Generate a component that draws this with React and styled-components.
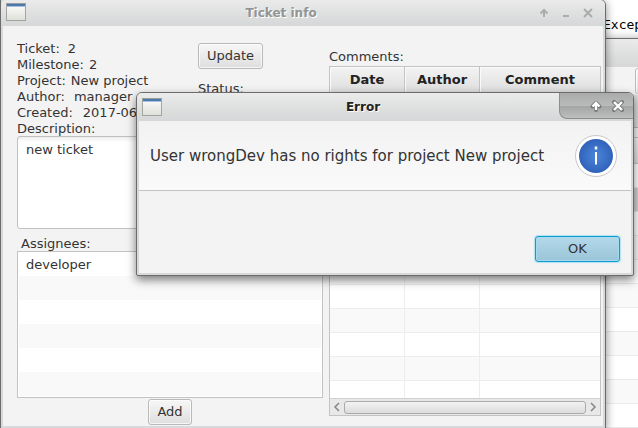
import React from "react";
import styled, { createGlobalStyle, css } from "styled-components";

const GlobalStyle = createGlobalStyle`
  * { box-sizing: border-box; }
  body {
    margin: 0;
    background: #fff;
    color: #333;
    font: 13px/16px "DejaVu Sans", sans-serif;
  }
  button, textarea { font: inherit; color: inherit; }
`;

const Desktop = styled.main`
  position: relative;
  min-height: 100vh;
  overflow: hidden;
`;

const Console = styled.pre`
  position: absolute;
  top: 17px;
  right: 0;
  width: 35px;
  margin: 0;
  overflow: hidden;
  color: #000;
  font: 13px/16px "DejaVu Sans Mono", monospace;
`;

const Frame = styled.section`
  position: absolute;
  display: flex;
  flex-direction: column;
  border: 1px solid #6c6c6c;
  background: #d8d9da;
  box-shadow: 0 2px 10px rgba(0, 0, 0, 0.45);
`;

const BackFrame = styled(Frame)`
  top: 38px;
  left: 300px;
  right: -120px;
  bottom: -20px;
`;

const TicketFrame = styled(Frame)`
  top: -1px;
  left: 0;
  right: 32px;
  bottom: -1px;
  border-radius: 0 6px 0 0;
`;

const ErrorFrame = styled(Frame)`
  top: 92px;
  left: 136px;
  right: 4px;
  border-radius: 6px 6px 2px 2px;
  box-shadow: 0 4px 10px rgba(0, 0, 0, 0.5);
`;

const TitleBar = styled.header`
  display: grid;
  grid-template-columns: 30px 1fr 74px;
  flex: none;
  height: ${(p) => p.$height || 28}px;
  border-radius: 5px 5px 0 0;
  background: linear-gradient(#ebebeb, #dfe0e0 50%, #d5d7d8);
`;

const WindowIcon = styled.svg`
  width: 20px;
  height: 18px;
  margin: ${(p) => p.$top}px 0 0 5px;
`;

const Title = styled.h1`
  margin: 0;
  align-self: center;
  text-align: center;
  font-size: 12px;
  line-height: 16px;
  color: ${(p) => (p.$inactive ? "#929596" : "#222")};
  text-shadow: 1px 1px 0 #fff;
`;

const WindowButtons = styled.div`
  display: flex;
  justify-content: flex-end;
  align-items: center;
  height: 26px;
  padding-right: 9px;
  gap: 6px;
  ${(p) =>
    p.$active &&
    css`
      padding-right: 7px;
      border: 1px solid #8b8d8e;
      border-width: 0 0 1px 1px;
      border-radius: 0 5px 0 8px;
      background: linear-gradient(#a9abab, #b9baba 50%, #a3a5a5 52%, #bdbebe);
    `}
`;

const WindowButton = styled.button`
  display: flex;
  padding: 0;
  border: 0;
  background: none;
  svg { width: 16px; height: 16px; }
`;

const Body = styled.div`
  flex: 1;
  min-height: 0;
  margin: 0 2px 2px;
  background: #f3f3f3;
`;

const TicketBody = styled(Body)`
  display: grid;
  grid-template-columns: 306fr 272fr;
  gap: 6px;
  padding: 15px 2px 0 14px;
`;

const Column = styled.div`
  display: flex;
  flex-direction: column;
  min-width: 0;
`;

const Details = styled.div`
  display: grid;
  grid-template-columns: 181px 1fr;
`;

const InfoList = styled.dl`
  margin: 0;
  white-space: nowrap;
`;

const InfoRow = styled.div`
  display: flex;
  gap: ${(p) => p.$gap}px;
  dt, dd { margin: 0; }
`;

const Actions = styled.div`
  display: flex;
  flex-direction: column;
  align-items: flex-start;
  gap: 12px;
  padding-top: 2px;
`;

const Button = styled.button`
  height: 26px;
  padding: 0 8px;
  border: 1px solid #b9b9b9;
  border-radius: 3px;
  background: linear-gradient(#f7f7f7, #dedede);
  box-shadow: inset 0 0 0 1px rgba(255, 255, 255, 0.7);
`;

const ToolButton = styled(Button)`
  width: 32px;
`;

const DefaultButton = styled(Button)`
  width: 85px;
  border-color: #0f9bd0;
  background: linear-gradient(#b3d9ea, #9bc4d8);
  box-shadow: 0 0 1px 1px #b4e2f2, inset 0 0 0 1px #a5dbef;
`;

const DescriptionLabel = styled.label`
  height: 15px;
`;

const Description = styled.textarea`
  display: block;
  width: 100%;
  height: 93px;
  padding: 5px 8px;
  border: 1px solid #c0c0c0;
  border-radius: 3px;
  background: linear-gradient(#ededed, #fff 5px);
  outline: 0;
  resize: none;
`;

const ListLabel = styled.h2`
  margin: 7px 0 0 4px;
  font-size: 13px;
  font-weight: 400;
  line-height: 15px;
`;

const AssigneeList = styled.ul`
  height: 147px;
  margin: 0;
  padding: 0 1px;
  border: 1px solid #c3c3c3;
  list-style: none;
  overflow: hidden;
  background: #fff;
`;

const Assignee = styled.li`
  height: 24px;
  padding: 5px 7px;
  &:nth-child(even) { background: #f9f9f9; }
`;

const AddRow = styled.div`
  display: flex;
  justify-content: center;
  padding-top: 1px;
`;

const CommentsColumn = styled(Column)`
  padding-top: 8px;
`;

const CommentsLabel = styled.h2`
  margin: 0 0 1px;
  font-size: 13px;
  font-weight: 400;
  line-height: 16px;
`;

const TableBox = styled.div`
  display: flex;
  flex-direction: column;
  height: 350px;
  border: 1px solid #c3c3c3;
  background: #fff;
`;

const TableClip = styled.div`
  flex: 1;
  min-height: 0;
  overflow: hidden;
`;

const Table = styled.table`
  width: 100%;
  table-layout: fixed;
  border-collapse: separate;
  border-spacing: 0;
  th, td {
    height: 24px;
    padding: 0;
    border-right: 1px solid #ededed;
    border-bottom: 1px solid #ededed;
  }
  th {
    height: 26px;
    border-color: #c3c3c3;
    background: linear-gradient(#f3f3f3, #dedede);
    box-shadow: inset 1px 1px 0 #fafafa;
    color: #222;
  }
  th:last-child, td:last-child { border-right: 0; }
  tbody tr:nth-child(even) { background: #f9f9f9; }
`;

const Col = styled.col`
  width: ${(p) => p.$width};
`;

const ScrollBar = styled.div`
  display: flex;
  align-items: center;
  height: 17px;
  border-top: 1px solid #d0d0d0;
  background: #e8e8e8;
`;

const ScrollArrow = styled.button`
  display: flex;
  justify-content: center;
  width: 14px;
  padding: 0;
  border: 0;
  background: none;
  svg { width: 8px; height: 10px; }
`;

const Thumb = styled.div`
  flex: 1;
  height: 13px;
  border: 1px solid #ababab;
  border-radius: 3px;
  background: linear-gradient(#f3f3f3, #dcdcdc);
`;

const BackBody = styled(Body)`
  display: flex;
  flex-direction: column;
`;

const BackToolbar = styled.div`
  flex: none;
  display: flex;
  align-items: flex-start;
  height: 61px;
  margin-bottom: 9px;
  padding: 1px 0 0 332px;
  border-bottom: 1px solid #b5b5b5;
  background: linear-gradient(#f3f3f3 27px, #dcdcdc 28px);
`;

const BackList = styled.ul`
  margin: 0;
  padding: 0;
  border-top: 1px solid #c3c3c3;
  list-style: none;
`;

const BackHeader = styled.li`
  height: 26px;
  border-bottom: 1px solid #c3c3c3;
  background: linear-gradient(#f3f3f3, #dedede);
`;

const BackRow = styled.li`
  height: 24px;
  border-bottom: 1px solid #e9e9e9;
  background: ${(p) => (p.$selected ? "#d2d2d2" : p.$striped ? "#f9f9f9" : "#fff")};
`;

const Message = styled.div`
  display: flex;
  align-items: center;
  justify-content: space-between;
  min-height: 70px;
  padding: 0 13px 0 11px;
  border-bottom: 1px solid #c3c3c3;
  background: linear-gradient(#f2f2f2, #fafafa);
  font-size: 15px;
  line-height: 20px;
  p { margin: 0; }
`;

const InfoIcon = styled.svg`
  flex: none;
  width: 44px;
  height: 44px;
`;

const DialogActions = styled.div`
  display: flex;
  justify-content: flex-end;
  padding: 45px 11px 11px;
`;

function AppIcon({ top }) {
  return (
    <WindowIcon $top={top} viewBox="0 0 20 18" aria-hidden="true">
      <defs>
        <linearGradient id="paper" x1="0" y1="0" x2="0" y2="1">
          <stop offset="0" stopColor="#fff" />
          <stop offset="1" stopColor="#dddfd8" />
        </linearGradient>
      </defs>
      <rect x="0.5" y="0.5" width="19" height="17" fill="url(#paper)" stroke="#a3a59f" />
      <path d="M0 .5h20" stroke="#9a9c98" />
      <path d="M1 2h18" stroke="#4c78b2" strokeWidth="2" />
      <path d="M1 3.5h18" stroke="#a9c0dd" />
    </WindowIcon>
  );
}

const SHAPES = {
  Shade: "M8 12V5M4.5 8.5 8 5l3.5 3.5",
  Minimize: "M5 11h6",
  Close: "M4 4l8 8M12 4l-8 8",
};

function ControlButton({ name, active }) {
  return (
    <WindowButton type="button" aria-label={name}>
      <svg viewBox="0 0 16 16" fill="none">
        {active && <path d={SHAPES[name]} stroke="#777" strokeWidth="4" strokeLinejoin="round" strokeLinecap="round" />}
        <path d={SHAPES[name]} stroke={active ? "#fff" : "#aaacad"} strokeWidth={active ? 2.4 : 2} />
      </svg>
    </WindowButton>
  );
}

const info = [
  ["Ticket:", "2", 8],
  ["Milestone:", "2", 5],
  ["Project:", "New project", 5],
  ["Author:", "manager", 9],
  ["Created:", "2017-06-02", 10],
];

export default function App() {
  return (
    <>
      <GlobalStyle />
      <Desktop>
        <Console>Excep</Console>

        <BackFrame aria-label="Projects">
          <TitleBar />
          <BackBody>
            <BackToolbar>
              <ToolButton type="button" aria-label="Open" />
            </BackToolbar>
            <BackList>
              <BackHeader />
              {Array.from({ length: 12 }, (_, i) => (
                <BackRow key={i} $selected={i === 1} $striped={i % 2 === 1} />
              ))}
            </BackList>
          </BackBody>
        </BackFrame>

        <TicketFrame aria-label="Ticket info">
          <TitleBar $height={26}>
            <AppIcon top={3} />
            <Title $inactive>Ticket info</Title>
            <WindowButtons>
              <ControlButton name="Shade" />
              <ControlButton name="Minimize" />
              <ControlButton name="Close" />
            </WindowButtons>
          </TitleBar>
          <TicketBody as="form">
            <Column>
              <Details>
                <InfoList>
                  {info.map(([label, value, gap]) => (
                    <InfoRow key={label} $gap={gap}>
                      <dt>{label}</dt>
                      <dd>{value}</dd>
                    </InfoRow>
                  ))}
                </InfoList>
                <Actions>
                  <Button type="button">Update</Button>
                  <span>Status:</span>
                </Actions>
              </Details>
              <DescriptionLabel htmlFor="description">Description:</DescriptionLabel>
              <Description id="description" defaultValue="new ticket" />
              <ListLabel id="assignees">Assignees:</ListLabel>
              <AssigneeList aria-labelledby="assignees">
                <Assignee>developer</Assignee>
                <Assignee />
                <Assignee />
                <Assignee />
                <Assignee />
                <Assignee />
              </AssigneeList>
              <AddRow>
                <Button type="button">Add</Button>
              </AddRow>
            </Column>
            <CommentsColumn>
              <CommentsLabel id="comments">Comments:</CommentsLabel>
              <TableBox>
                <TableClip>
                  <Table aria-labelledby="comments">
                    <colgroup>
                      <Col $width="75px" />
                      <Col $width="75px" />
                      <Col $width="auto" />
                    </colgroup>
                    <thead>
                      <tr>
                        <th>Date</th>
                        <th>Author</th>
                        <th>Comment</th>
                      </tr>
                    </thead>
                    <tbody>
                      {Array.from({ length: 13 }, (_, i) => (
                        <tr key={i}>
                          <td />
                          <td />
                          <td />
                        </tr>
                      ))}
                    </tbody>
                  </Table>
                </TableClip>
                <ScrollBar>
                  <ScrollArrow type="button" aria-label="Scroll left">
                    <svg viewBox="0 0 8 10" fill="none" stroke="#858585" strokeWidth="1.5">
                      <path d="M6 1 2 5l4 4" />
                    </svg>
                  </ScrollArrow>
                  <Thumb />
                  <ScrollArrow type="button" aria-label="Scroll right">
                    <svg viewBox="0 0 8 10" fill="none" stroke="#858585" strokeWidth="1.5">
                      <path d="m2 1 4 4-4 4" />
                    </svg>
                  </ScrollArrow>
                </ScrollBar>
              </TableBox>
            </CommentsColumn>
          </TicketBody>
        </TicketFrame>

        <ErrorFrame role="dialog" aria-labelledby="error-title">
          <TitleBar>
            <AppIcon top={5} />
            <Title id="error-title">Error</Title>
            <WindowButtons $active>
              <ControlButton name="Shade" active />
              <ControlButton name="Close" active />
            </WindowButtons>
          </TitleBar>
          <Body>
            <Message>
              <p>User wrongDev has no rights for project New project</p>
              <InfoIcon viewBox="0 0 44 44" aria-hidden="true">
                <defs>
                  <radialGradient id="disc">
                    <stop offset="0" stopColor="#4a86da" />
                    <stop offset="1" stopColor="#3262bb" />
                  </radialGradient>
                </defs>
                <circle cx="22" cy="22" r="20.5" fill="#fff" stroke="#c9c9c9" />
                <circle cx="22" cy="22" r="17" fill="url(#disc)" />
                <path d="M22 18v12.5" stroke="#fff" strokeWidth="2" />
                <path d="M22 12.5v3" stroke="#fff" strokeWidth="2.5" />
              </InfoIcon>
            </Message>
            <DialogActions>
              <DefaultButton type="button">OK</DefaultButton>
            </DialogActions>
          </Body>
        </ErrorFrame>
      </Desktop>
    </>
  );
}
